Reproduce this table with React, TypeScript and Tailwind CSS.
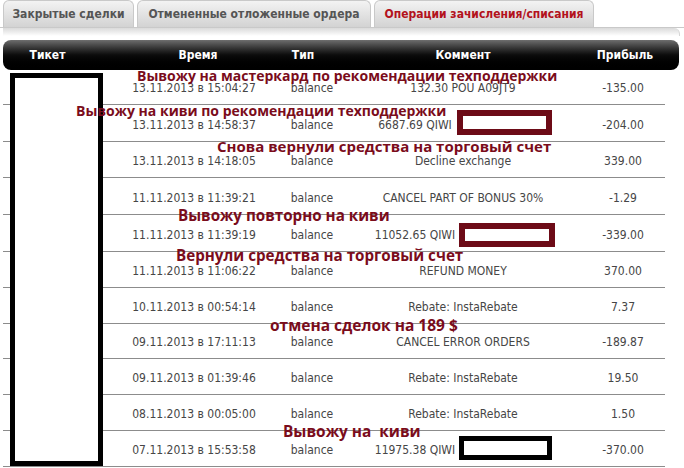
const rows = [
  { time: '13.11.2013 в 15:04:27', comment: '132.30 POU A09JT9', profit: '-135.00', h: 'h-[35px]' },
  { time: '13.11.2013 в 14:58:37', comment: '6687.69 QIWI', profit: '-204.00', h: 'h-[37px]', hidden: true },
  { time: '13.11.2013 в 14:18:05', comment: 'Decline exchange', profit: '339.00', h: 'h-[36px]' },
  { time: '11.11.2013 в 11:39:21', comment: 'CANCEL PART OF BONUS 30%', profit: '-1.29', h: 'h-[37px]' },
  { time: '11.11.2013 в 11:39:19', comment: '11052.65 QIWI', profit: '-339.00', h: 'h-[37px]', hidden: true },
  { time: '11.11.2013 в 11:06:22', comment: 'REFUND MONEY', profit: '370.00', h: 'h-[36px]' },
  { time: '10.11.2013 в 00:54:14', comment: 'Rebate: InstaRebate', profit: '7.37', h: 'h-[36px]' },
  { time: '09.11.2013 в 17:11:13', comment: 'CANCEL ERROR ORDERS', profit: '-189.87', h: 'h-[35px]' },
  { time: '09.11.2013 в 01:39:46', comment: 'Rebate: InstaRebate', profit: '19.50', h: 'h-[36px]' },
  { time: '08.11.2013 в 00:05:00', comment: 'Rebate: InstaRebate', profit: '1.50', h: 'h-[36px]' },
  { time: '07.11.2013 в 15:53:58', comment: '11975.38 QIWI', profit: '-370.00', h: 'h-[36px]', hidden: true },
]

const notes = [
  { text: 'Вывожу на мастеркард по рекомендации техподдержки', cls: 'left-[137px] top-[67px] text-[14px]' },
  { text: 'Вывожу на киви по рекомендации техподдержки', cls: 'left-[76px] top-[102px] text-[14px]' },
  { text: 'Снова вернули средства на торговый счет', cls: 'left-[217px] top-[137px] text-[15px]' },
  { text: 'Вывожу повторно на киви', cls: 'left-[178px] top-[206px] text-[15.2px]' },
  { text: 'Вернули средства на торговый счет', cls: 'left-[176px] top-[246px] text-[15.2px]' },
  { text: 'отмена сделок на 189 $', cls: 'left-[270px] top-[316px] text-[15.5px]' },
  { text: 'Вывожу на  киви', cls: 'left-[283px] top-[423px] text-[15.4px]' },
]

const tableFont = "font-['DejaVu_Sans_Condensed','DejaVu_Sans',sans-serif]"

const Tab = ({ label, active, w }: { label: string; active?: boolean; w: string }) => (
  <div
    className={`${w} flex h-[27px] items-center justify-center rounded-t-[6px] border border-b-0 border-[#c9c9c9] bg-linear-to-b from-[#f3f3f3] to-[#d3d3d3] text-[12px] font-bold ${
      active ? 'text-[#b3121c]' : 'text-[#555555]'
    }`}
  >
    {label}
  </div>
)

export default function App() {
  return (
    <div className={`relative h-[468px] w-[684px] overflow-hidden bg-white ${tableFont}`}>
      <div className="flex h-[28px] items-end gap-[3px] border-b border-[#c9c9c9] pl-[3px] pr-[4px]">
        <Tab label="Закрытые сделки" w="w-[131px]" />
        <Tab label="Отмененные отложенные ордера" w="w-[234px]" />
        <Tab label="Операции зачисления/списания" w="w-[220px]" active />
      </div>
      <div className="mr-[4px] ml-[3px] h-[8px] rounded-tr-[6px] border-r border-[#d6d6d6] bg-linear-to-b from-[#dadada] to-white" />

      <div className="mt-[4px] mr-[5px] ml-[3px] grid h-[30px] grid-cols-[89px_204px_32px_270px_50px_1fr] items-center rounded-[8px] bg-linear-to-b from-[#6e6e6e] via-[#0c0c0c] to-black text-[12px] font-bold text-white">
        <div className="flex justify-center">Тикет</div>
        <div className="flex justify-center pl-[8px]">Время</div>
        <div className="flex justify-center pr-[18px]">Тип</div>
        <div className="flex justify-center">Коммент</div>
        <div className="flex justify-center pl-[4px]">Прибыль</div>
        <div />
      </div>

      <div className="ml-[3px] w-[662px] text-[12px] text-[#464646]">
        {rows.map((r, i) => (
          <div
            key={i}
            className={`grid grid-cols-[89px_204px_32px_270px_50px_1fr] items-end border-b border-[#8c8c8c] pb-[7px] ${r.h}`}
          >
            <div />
            <div className="flex justify-center whitespace-nowrap">{r.time}</div>
            <div className="flex justify-center whitespace-nowrap">balance</div>
            <div className="flex justify-center whitespace-nowrap">
              <span className={r.hidden ? 'mr-[96px]' : ''}>{r.comment}</span>
            </div>
            <div className="flex justify-center whitespace-nowrap">{r.profit}</div>
            <div />
          </div>
        ))}
      </div>

      {/* redaction boxes */}
      <div className="absolute left-[10px] top-[73px] h-[393px] w-[93px] border-[5px] border-black bg-white" />
      <div className="absolute left-[457px] top-[110px] h-[25px] w-[95px] border-[6px] border-[#6d0b17] bg-white" />
      <div className="absolute left-[459px] top-[223px] h-[24px] w-[96px] border-[6px] border-[#6d0b17] bg-white" />
      <div className="absolute left-[459px] top-[436px] h-[24px] w-[93px] border-[5px] border-black bg-white" />

      {/* annotations */}
      {notes.map((n, i) => (
        <div
          key={i}
          className={`absolute ${n.cls} whitespace-pre font-['Open_Sans',sans-serif] leading-[18px] font-bold text-[#7a0c1b]`}
        >
          {n.text}
        </div>
      ))}
    </div>
  )
}
